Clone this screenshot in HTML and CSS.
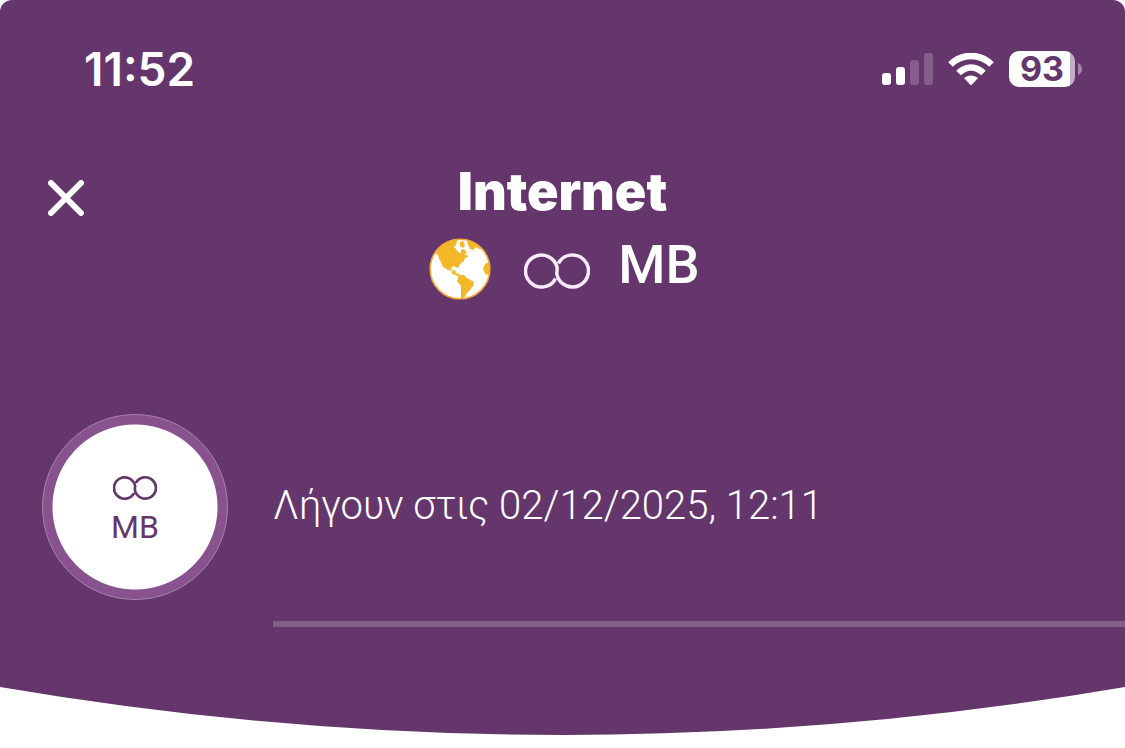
FILE: index.html
```html
<!DOCTYPE html>
<html lang="el">
<head>
    <meta charset="UTF-8">
    <meta name="viewport" content="width=device-width, initial-scale=1.0">
    <title>Internet MB</title>
    <link rel="stylesheet" href="styles.css">
</head>
<body>
    <div class="panel">
        <div class="status-bar">
            <time class="clock">11:52</time>
            <div class="status-icons">
                <svg class="signal" viewBox="0 0 51 32" width="51" height="32" fill="#fff">
                    <rect x="0" y="20" width="9" height="12" rx="3"/>
                    <rect x="14" y="14" width="9" height="18" rx="3"/>
                    <rect x="28" y="7" width="9" height="25" rx="3" opacity="0.2"/>
                    <rect x="42" y="0" width="9" height="32" rx="3" opacity="0.2"/>
                </svg>
                <svg class="wifi" viewBox="0 0 46 33" width="46" height="33">
                    <path d="M2.500 11.500C14 0 32 0 43.500 11.500M10.500 20C18 12.500 28 12.500 35.500 20" fill="none" stroke="#fff" stroke-width="6.500"/>
                    <path d="M16 25C20 21.500 26 21.500 30 25L24 31.500Q23 32.500 22 31.500Z" fill="#fff"/>
                </svg>
                <div class="battery">
                    <span class="battery-level">93</span>
                    <svg class="battery-cap" viewBox="0 0 4 12" width="4" height="12">
                        <path d="M0 0Q4 2 4 6T0 12Z" fill="#a388ab"/>
                    </svg>
                </div>
            </div>
        </div>

        <header class="header">
            <button type="button" class="close" aria-label="Close">
                <svg viewBox="0 0 36 36" width="36" height="36">
                    <path d="M3 3L33 33M33 3L3 33" stroke="#fff" stroke-width="6" stroke-linecap="round"/>
                </svg>
            </button>
            <div class="heading">
                <h1 class="title">Internet</h1>
                <div class="amount">
                    <svg class="globe" viewBox="0 0 62 62" width="62" height="62">
                        <circle cx="31" cy="31" r="30" fill="#fff"/>
                        <g fill="#f2b827">
                            <path d="M29 1C19 2 11 7 6 15L9 17L10 21L12 24L14 29L19 32L23 33L23 36L27 37L30 39L30 36L27 35L26 32L23 33L22 30L25 28L28 30L30 29L31 26L35 23L36 20L39 19L38 17L35 17L38 15L35 11L32 12L32 15L29 14L27 11L25 9L27 7L28 4Z"/>
                            <path d="M31 4L34 3L36 7L34 10L31 8Z"/>
                            <path d="M38 2L47 5L53 11L50 11L47 9L44 12L41 11L39 7Z"/>
                            <path d="M30 37L35 37L38 40L45 44L44 48L41 52L38 55L35 60L32 60L32 53L32 48L28 43Z"/>
                            <path d="M60 24L56 26L54 31L56 36L60 37Z"/>
                        </g>
                        <circle cx="31" cy="31" r="29.800" fill="none" stroke="#f2a93a" stroke-width="1.600"/>
                    </svg>
                    <svg class="infinity" viewBox="0 0 66 38" width="66" height="38" role="img" aria-label="Unlimited">
                        <path d="M31.600 26.600A16 16 0 1 1 33.200 16L32.800 22A16 16 0 1 0 34.400 11.400" fill="none" stroke="#f7ebfb" stroke-width="3.500"/>
                    </svg>
                    <span class="unit">MB</span>
                </div>
            </div>
        </header>

        <section class="bundle">
            <div class="badge">
                <svg class="infinity" viewBox="0 0 66 38" width="44" height="26" role="img" aria-label="Unlimited">
                    <path d="M31.600 26.600A16 16 0 1 1 33.200 16L32.800 22A16 16 0 1 0 34.400 11.400" fill="none" stroke="#64366c" stroke-width="4"/>
                </svg>
                <span class="badge-unit">MB</span>
            </div>
            <div class="details">
                <p class="expires">Λήγουν στις 02/12/2025, 12:11</p>
                <div class="track"></div>
            </div>
        </section>
    </div>
    <svg class="curve" viewBox="0 0 100 48" preserveAspectRatio="none">
        <path d="M0 0Q50 96 100 0Z" fill="#64366c"/>
    </svg>
</body>
</html>
```

FILE: styles.css
```css
body {
    font-family: Roboto, 'Noto Sans', sans-serif;
    margin: 0;
    background: #fff;
    color: #fff;
}

.panel {
    background: #64366c;
    border-radius: 12px 12px 0 0;
    padding-bottom: 60px;
}

/* Phone status bar */
.status-bar {
    display: flex;
    justify-content: space-between;
    align-items: center;
    padding: 48px 43px 0 84px;
    height: 42px;
}

.clock {
    font-family: Inter, sans-serif;
    font-size: 46px;
    font-weight: 600;
}

.status-icons {
    display: flex;
    align-items: center;
    gap: 15px;
}

.battery {
    display: flex;
    align-items: center;
    gap: 3px;
}

.battery-level {
    width: 66px;
    height: 36px;
    box-sizing: border-box;
    border-radius: 10px;
    background: linear-gradient(90deg, #fff 61px, #c1afc4 61px);
    color: #64366c;
    font-family: Inter, sans-serif;
    font-size: 34px;
    font-weight: 700;
    line-height: 36px;
    text-align: center;
}

/* Title row, heading stays centred between equal side columns */
.header {
    display: grid;
    grid-template-columns: 36px 1fr 36px;
    padding: 70px 48px 0;
}

.close {
    width: 36px;
    height: 36px;
    margin-top: 20px;
    padding: 0;
    border: none;
    background: none;
    cursor: pointer;
}

.close svg {
    display: block;
}

.heading {
    display: flex;
    flex-direction: column;
    align-items: center;
}

.title {
    margin: 0;
    font-family: Inter, sans-serif;
    font-size: 52px;
    font-weight: 900;
    line-height: 64px;
}

.amount {
    display: flex;
    align-items: center;
    height: 90px;
    padding-left: 4px;
}

.amount .infinity {
    margin: 4px 28px 0 33px;
}

.unit {
    font-size: 54px;
    font-weight: 500;
    line-height: 64px;
    padding-bottom: 8px;
}

/* Bundle details */
.bundle {
    display: flex;
    align-items: flex-start;
    padding: 100px 0 0 42px;
}

.badge {
    display: flex;
    flex-direction: column;
    align-items: center;
    justify-content: center;
    flex: none;
    width: 186px;
    height: 186px;
    box-sizing: border-box;
    padding-top: 8px;
    border: 1px solid #a783ad;
    border-radius: 50%;
    background: radial-gradient(circle at 50% 50%, #fff 82px, #88528f 83px) border-box;
    color: #64366c;
}

.badge-unit {
    font-size: 32px;
    line-height: 40px;
    margin-top: 6px;
}

.details {
    flex: 1;
    margin-left: 45px;
}

.expires {
    margin: 66px 0 89px;
    font-size: 40px;
    font-weight: 300;
    line-height: 52px;
}

.track {
    height: 6px;
    background: #835e8a;
}

.curve {
    display: block;
    width: 100%;
    height: 48px;
}
```
